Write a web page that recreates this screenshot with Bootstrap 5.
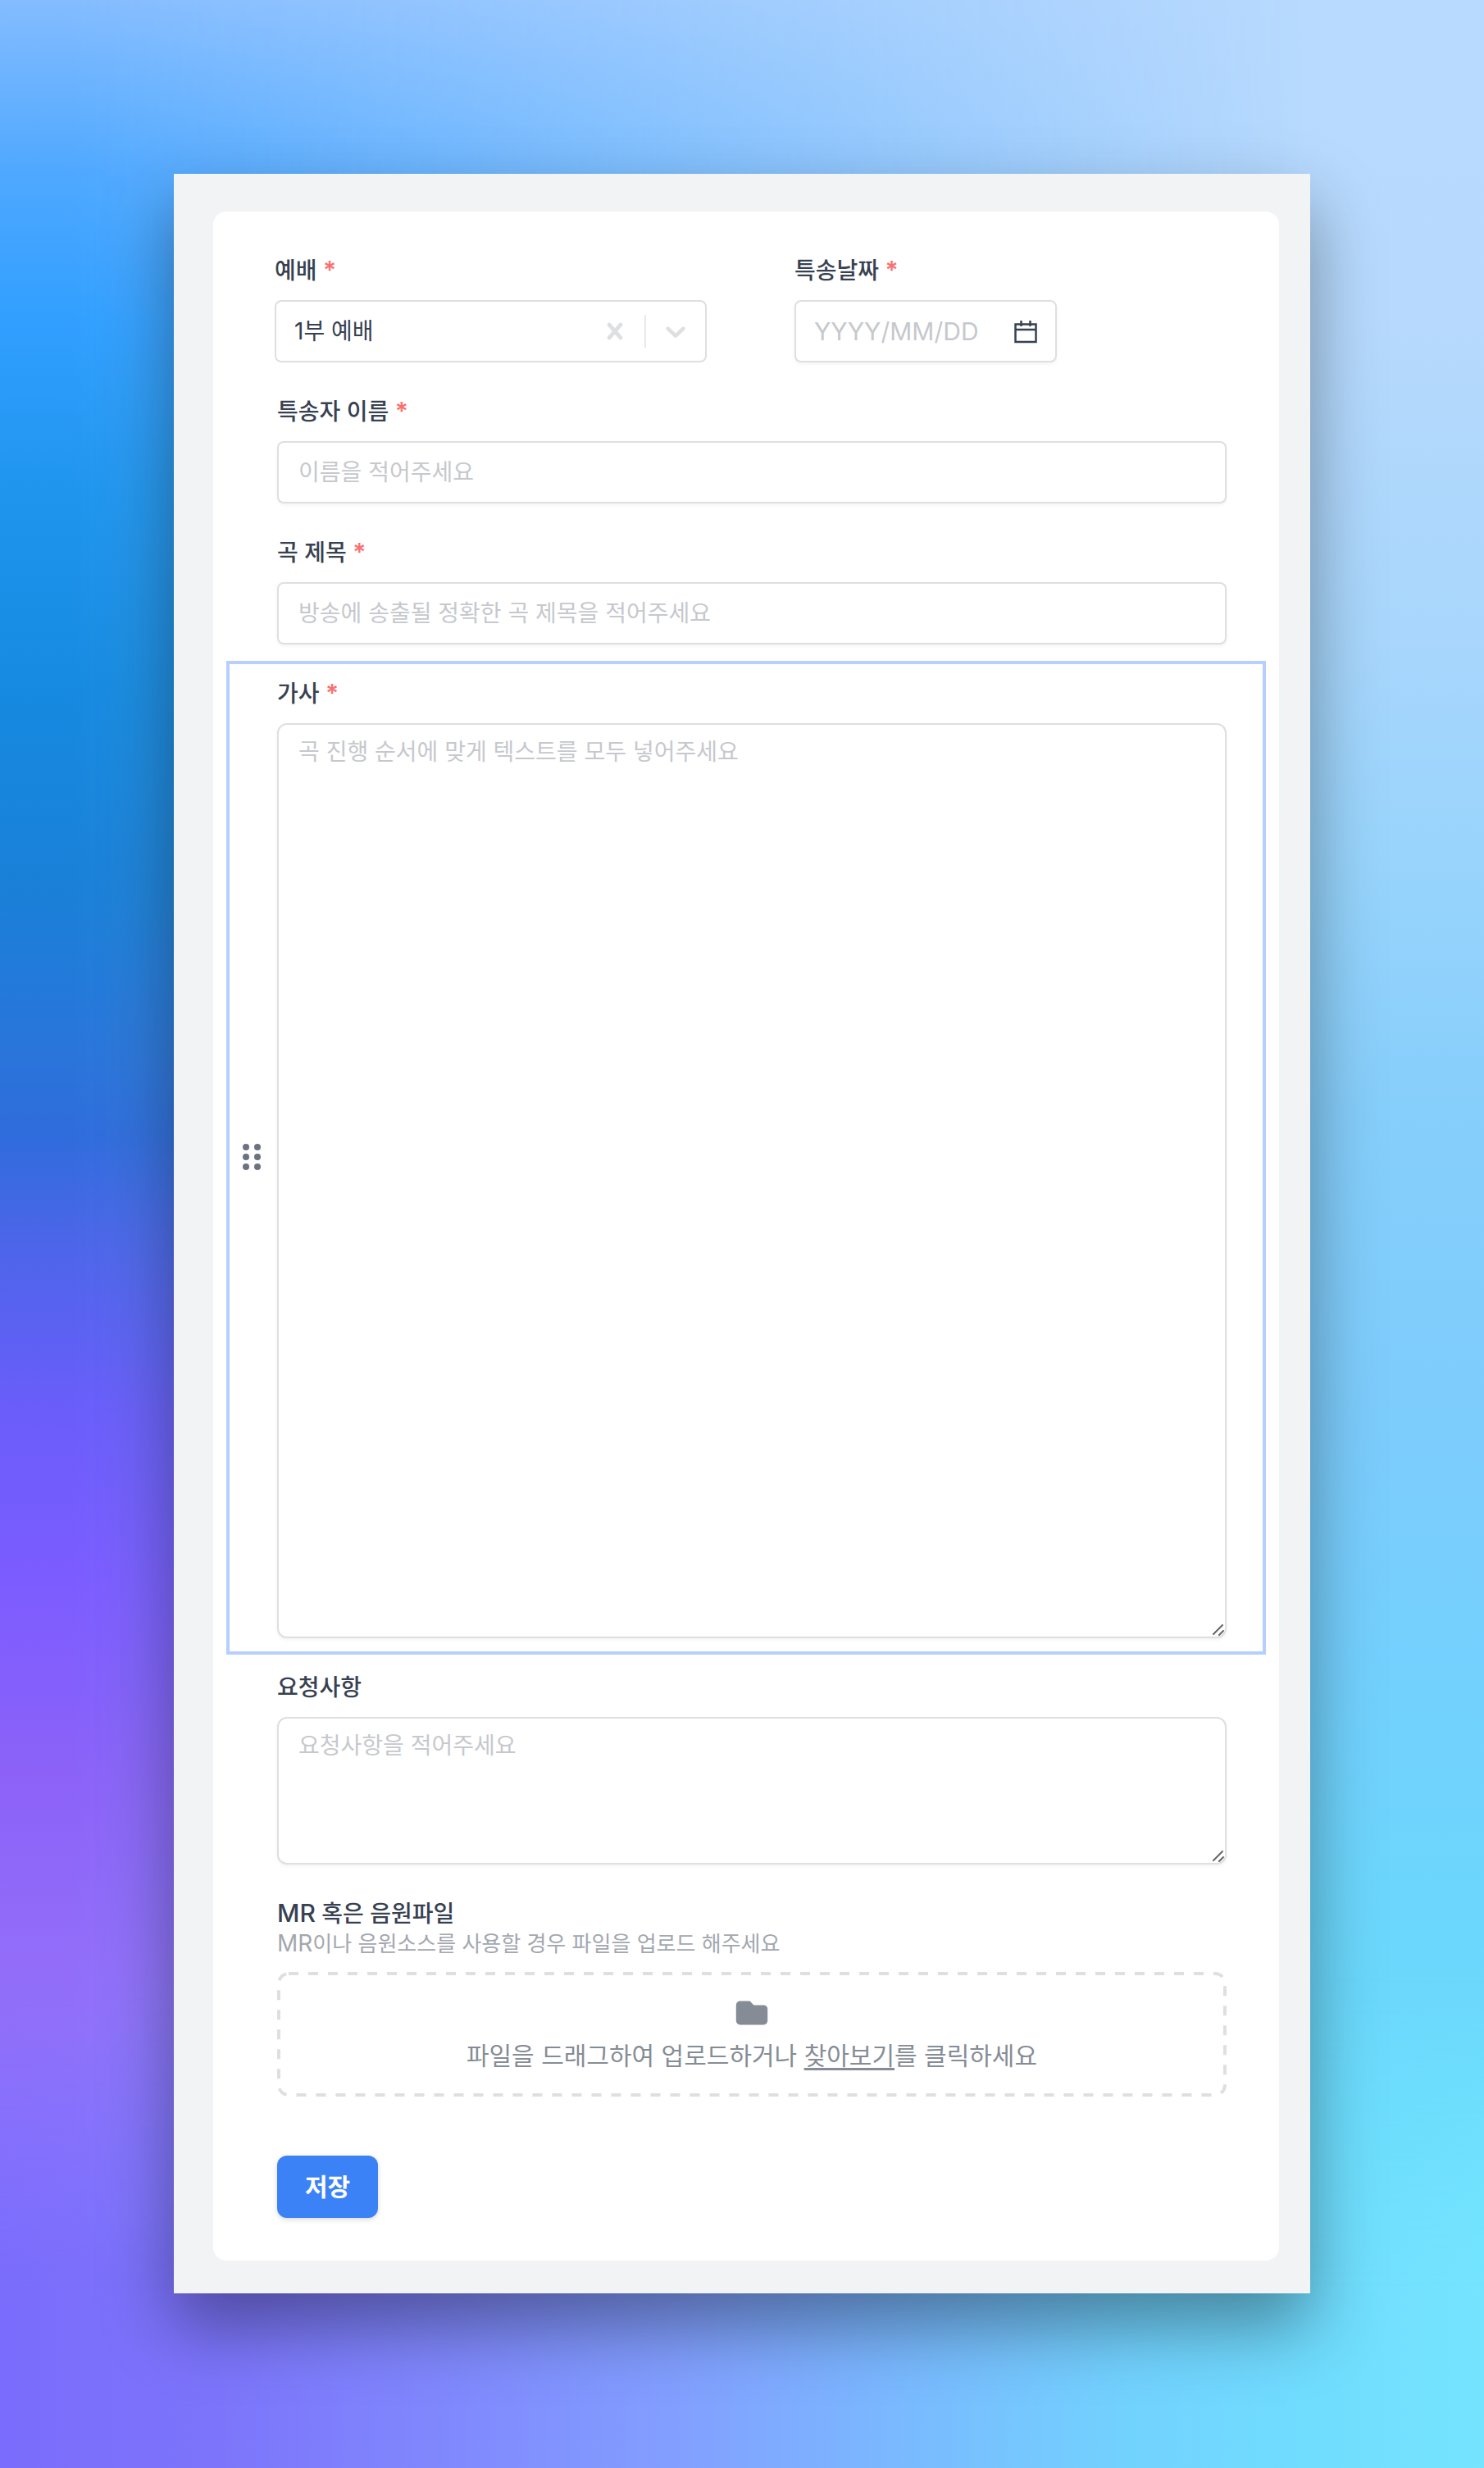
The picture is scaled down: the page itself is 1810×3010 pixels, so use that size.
<!DOCTYPE html>
<html lang="ko">
<head>
<meta charset="utf-8">
<meta name="viewport" content="width=device-width, initial-scale=1">
<title>특송 신청서</title>
<link href="https://cdn.jsdelivr.net/npm/bootstrap@5.3.0/dist/css/bootstrap.min.css" rel="stylesheet">
<style>
  :root { --ink: #374151; --line: #dedfe1; --hint: #c6c8cd; }
  html { background: linear-gradient(180deg, #b8dafe 0%, #b6d9fd 13%, #a8d6fc 26%, #98d4fc 35%, #86cefb 45%, #7cccfc 58%, #74d0fe 67%, #6cd6fc 77%, #6adcfc 87%, #74e4ff 100%); }
  body {
    font-family: Inter, "Noto Sans CJK KR", sans-serif;
    font-size: 28px; line-height: 40px; color: var(--ink);
    background: transparent;
  }
  /* Left half of the backdrop, fading into the right one */
  .backdrop {
    position: fixed; inset: 0; z-index: -1;
    background: linear-gradient(180deg, #84bcff 0%, #4fa8ff 7%, #319fff 13%, #1f95ee 20%, #168ae0 28%, #1a80d8 36%, #2a74da 43%, #2f6cdc 46%, #4a66e8 50%, #6a5dfa 57%, #7c5cff 64%, #8c62f8 72%, #9470fa 82%, #8c76fe 90%, #7468fb 100%);
    -webkit-mask-image: linear-gradient(90deg, #000 0, #000 5%, transparent 88%);
    mask-image: linear-gradient(90deg, #000 0, #000 5%, transparent 88%);
  }
  /* Violet-to-cyan wash along the bottom edge */
  .backdrop-foot {
    position: fixed; inset: 80% 0 0 0; z-index: -1;
    background: linear-gradient(90deg, #7a6cfc 0%, #7c74fb 14%, #8088fd 30%, #82a0ff 46%, #7ab8ff 60%, #72d2fe 76%, #70dcfe 88%, #74e4ff 100%);
    -webkit-mask-image: linear-gradient(0deg, #000 0, #000 35%, transparent 100%);
    mask-image: linear-gradient(0deg, #000 0, #000 35%, transparent 100%);
  }
  .stage { padding: 212px; min-height: 100vh; }
  .sheet { background: #f2f3f5; padding: 46px 38px 40px 48px; box-shadow: 0 40px 80px rgba(0,0,0,.38); }
  .panel { background: #fff; border-radius: 16px; padding: 32px 16px 52px; }

  /* One form block: a grip gutter on the left, the field beside it */
  .block { border: 4px solid transparent; padding: 14px 44px 16px 0; }
  .block.picked { border-color: #b6cfff; }
  .gutter { width: 58px; padding-right: 4px; color: #6b7280; }
  .half .gutter { width: 55px; }
  .tag { display: block; font-weight: 500; line-height: 44px; margin-bottom: 14px; }
  .tag-tight { margin-bottom: 0; }
  .must { color: #f87171; font-size: 30px; font-weight: 600; line-height: 1; }
  .tag .latin { font-size: 30px; line-height: 1; }
  .subtext { font-size: 26px; line-height: 28px; color: #a3a7af; margin-bottom: 20px; }
  .subtext .latin { font-size: 28px; line-height: 1; }

  .field, .field:focus {
    font-size: 28px; line-height: 40px; color: var(--ink);
    border: 2px solid var(--line); border-radius: 8px; padding: 16px 24px;
    box-shadow: 0 2px 4px rgba(0,0,0,.05); background: #fff;
  }
  .field::placeholder, .bare::placeholder { color: var(--hint); opacity: 1; }
  textarea.field, textarea.field:focus { border-radius: 12px; padding: 13px 24px; display: block; resize: vertical; }
  textarea.field::-webkit-resizer {
    background: url("data:image/svg+xml,%3Csvg xmlns='http://www.w3.org/2000/svg' width='15' height='15'%3E%3Cpath d='M1 12L12 1M8 13L13 8' stroke='%23666' stroke-width='2' stroke-linecap='round'/%3E%3C/svg%3E") no-repeat;
  }
  .tall { height: 1116px; }
  .short { height: 180px; }
  .combo { border: 2px solid var(--line); border-radius: 8px; height: 76px; background: #fff; }
  .combo.raised { box-shadow: 0 2px 4px rgba(0,0,0,.05); width: 320px; }
  .bare { border: 0; background: transparent; appearance: none; outline: 0; padding: 0 0 0 22px; color: var(--ink); min-width: 0; width: 0; }
  .date { font-size: 30px; }
  .plain { border: 0; background: transparent; padding: 0; }
  .cell { width: 72px; color: var(--line); }
  .bar { width: 2px; margin: 16px 0; background: #e8e9eb; }

  .drop { padding: 26px 28px 32px; gap: 10px; color: #868c96; font-size: 30px; line-height: 36px; }
  .drop a { color: inherit; text-underline-offset: 4px; }
  .dashes { position: absolute; inset: 0; width: 100%; height: 100%; pointer-events: none; }
  .dashes rect { x: 2px; y: 2px; width: calc(100% - 4px); height: calc(100% - 4px); fill: none; stroke: var(--line); stroke-width: 4px; stroke-dasharray: 12 12; }
  .save { background: #3b82f6; border: 0; border-radius: 12px; padding: 18px 34px; font-size: 30px; line-height: 40px; font-weight: 600; color: #fff; box-shadow: 0 2px 6px rgba(0,0,0,.15); margin: 52px 0 0 62px; }
</style>
<script src="https://cdn.jsdelivr.net/npm/bootstrap@5.3.0/dist/js/bootstrap.bundle.min.js" defer></script>
</head>
<body>
<div class="backdrop"></div>
<div class="backdrop-foot"></div>
<main class="stage">
  <div class="sheet">
    <form class="panel">
      <div class="row g-0">
        <div class="col-6 block half d-flex">
          <div class="gutter flex-shrink-0"></div>
          <div class="flex-grow-1">
            <label class="tag" for="service">예배 <span class="must">*</span></label>
            <div class="combo d-flex">
              <select class="bare flex-grow-1" id="service"><option>1부 예배</option></select>
              <button type="button" class="plain cell flex-shrink-0 d-flex align-items-center justify-content-center" aria-label="지우기">
                <svg width="40" height="40" viewBox="0 0 20 20" fill="currentColor"><path d="M14.348 14.849c-0.469 0.469-1.229 0.469-1.697 0l-2.651-3.030-2.651 3.029c-0.469 0.469-1.229 0.469-1.697 0-0.469-0.469-0.469-1.229 0-1.697l2.758-3.15-2.759-3.152c-0.469-0.469-0.469-1.228 0-1.697s1.228-0.469 1.697 0l2.652 3.031 2.651-3.031c0.469-0.469 1.228-0.469 1.697 0s0.469 1.229 0 1.697l-2.758 3.152 2.758 3.15c0.469 0.469 0.469 1.229 0 1.698z"/></svg>
              </button>
              <span class="bar"></span>
              <span class="cell flex-shrink-0 d-flex align-items-center justify-content-center">
                <svg width="40" height="40" viewBox="0 0 20 20" fill="currentColor"><path d="M4.516 7.548c0.436-0.446 1.043-0.481 1.576 0l3.908 3.747 3.908-3.747c0.533-0.481 1.141-0.446 1.574 0 0.436 0.445 0.408 1.197 0 1.615-0.406 0.418-4.695 4.502-4.695 4.502-0.217 0.223-0.502 0.335-0.787 0.335s-0.57-0.112-0.789-0.335c0 0-4.287-4.084-4.695-4.502s-0.436-1.17 0-1.615z"/></svg>
              </span>
            </div>
          </div>
        </div>
        <div class="col-6 block half d-flex">
          <div class="gutter flex-shrink-0"></div>
          <div class="flex-grow-1">
            <label class="tag" for="day">특송날짜 <span class="must">*</span></label>
            <div class="combo raised d-flex">
              <input class="bare date flex-grow-1" id="day" type="text" placeholder="YYYY/MM/DD">
              <button type="button" class="plain cell flex-shrink-0 d-flex align-items-center justify-content-center" aria-label="달력 열기">
                <svg width="32" height="32" viewBox="0 0 32 32" fill="none" stroke="#374151" stroke-width="2.5"><path d="M3.500 7.500h25v21.500h-25zM3.500 14h25M10.500 3v7M21.500 3v7"/></svg>
              </button>
            </div>
          </div>
        </div>
      </div>

      <div class="block d-flex">
        <div class="gutter flex-shrink-0"></div>
        <div class="flex-grow-1">
          <label class="tag" for="singer">특송자 이름 <span class="must">*</span></label>
          <input class="form-control field" id="singer" type="text" placeholder="이름을 적어주세요">
        </div>
      </div>

      <div class="block d-flex">
        <div class="gutter flex-shrink-0"></div>
        <div class="flex-grow-1">
          <label class="tag" for="song">곡 제목 <span class="must">*</span></label>
          <input class="form-control field" id="song" type="text" placeholder="방송에 송출될 정확한 곡 제목을 적어주세요">
        </div>
      </div>

      <div class="block picked d-flex">
        <button type="button" class="plain gutter flex-shrink-0 d-flex align-items-center justify-content-center pe-1" aria-label="순서 바꾸기">
          <svg width="22" height="32" viewBox="0 0 22 32" fill="currentColor"><circle cx="4" cy="4" r="4"/><circle cx="18" cy="4" r="4"/><circle cx="4" cy="16" r="4"/><circle cx="18" cy="16" r="4"/><circle cx="4" cy="28" r="4"/><circle cx="18" cy="28" r="4"/></svg>
        </button>
        <div class="flex-grow-1">
          <label class="tag" for="lyrics">가사 <span class="must">*</span></label>
          <textarea class="form-control field tall" id="lyrics" placeholder="곡 진행 순서에 맞게 텍스트를 모두 넣어주세요"></textarea>
        </div>
      </div>

      <div class="block d-flex">
        <div class="gutter flex-shrink-0"></div>
        <div class="flex-grow-1">
          <label class="tag" for="request">요청사항</label>
          <textarea class="form-control field short" id="request" placeholder="요청사항을 적어주세요"></textarea>
        </div>
      </div>

      <div class="block d-flex">
        <div class="gutter flex-shrink-0"></div>
        <div class="flex-grow-1">
          <div class="tag tag-tight"><span class="latin">MR</span> 혹은 음원파일</div>
          <div class="subtext"><span class="latin">MR</span>이나 음원소스를 사용할 경우 파일을 업로드 해주세요</div>
          <div class="drop position-relative d-flex flex-column align-items-center text-center">
            <svg class="dashes" aria-hidden="true"><rect rx="12" ry="12"/></svg>
            <svg width="48" height="48" viewBox="0 0 20 20" fill="currentColor"><path d="M2 6a2 2 0 012-2h5l2 2h5a2 2 0 012 2v6a2 2 0 01-2 2H4a2 2 0 01-2-2V6z"/></svg>
            <div>파일을 드래그하여 업로드하거나 <a href="#">찾아보기</a>를 클릭하세요</div>
          </div>
        </div>
      </div>

      <button type="submit" class="btn save">저장</button>
    </form>
  </div>
</main>
</body>
</html>
